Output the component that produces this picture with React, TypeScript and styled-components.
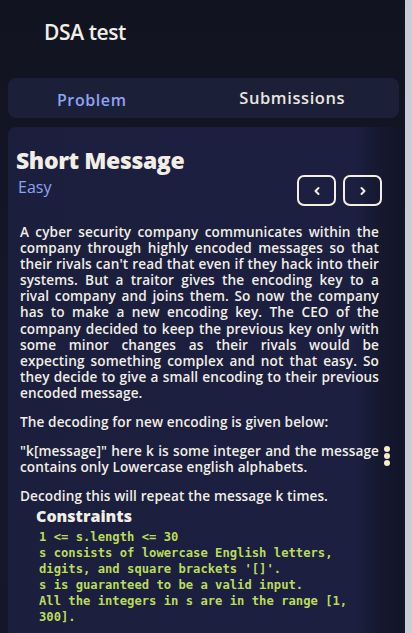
import React from "react";
import styled, { createGlobalStyle } from "styled-components";

const Global = createGlobalStyle`
  html, body { margin: 0; padding: 0; background: #14162a; }
  * { box-sizing: border-box; }
`;

const Screen = styled.div`
  width: 412px;
  height: 633px;
  overflow: hidden;
  display: flex;
  background: #c9cdd8;
`;

const Page = styled.div`
  width: 405px;
  height: 633px;
  background: linear-gradient(180deg, #111320 0%, #15182b 60%, #14162a 100%);
  display: flex;
  flex-direction: column;
  font-family: "Open Sans", "Noto Sans", sans-serif;
  color: #f1eee6;
`;

const Header = styled.div`
  flex-shrink: 0;
  height: 72px;
  padding: 18px 0 0 44px;
  font-size: 21px;
  font-weight: 600;
  letter-spacing: -0.4px;
`;

const Tabs = styled.div`
  flex-shrink: 0;
  margin: 6px 6px 0 8px;
  height: 40px;
  border-radius: 8px;
  background: #1c1f38;
  display: grid;
  grid-template-columns: 1fr 1fr;
  align-items: center;
`;

const Tab = styled.div<{ $active?: boolean }>`
  text-align: center;
  font-size: ${(p) => (p.$active ? "16px" : "16.5px")};
  font-weight: 600;
  letter-spacing: 0.6px;
  color: ${(p) => (p.$active ? "#8ea3f4" : "#e9e6df")};
  padding-right: ${(p) => (p.$active ? "28px" : "18px")};
  margin-top: ${(p) => (p.$active ? "4px" : "-2px")};
`;

const Card = styled.div`
  position: relative;
  flex: 1;
  min-height: 0;
  overflow: hidden;
  margin: 9px 2px 0 8px;
  border-radius: 8px 8px 0 0;
  background: linear-gradient(90deg, #1b1e3c 0%, #1c1f40 88%, #15182f 94%, #121428 100%);
  padding: 18px 24px 0 8px;
  display: flex;
  flex-direction: column;
`;

const TitleRow = styled.div`
  display: flex;
  justify-content: space-between;
  align-items: flex-end;
`;

const TitleBlock = styled.div`
  display: flex;
  flex-direction: column;
`;

const Title = styled.h1`
  margin: 0;
  font-size: 23px;
  font-weight: 800;
  letter-spacing: -0.4px;
  line-height: 30px;
`;

const Difficulty = styled.div`
  margin-top: 1px;
  font-size: 16px;
  font-weight: 500;
  color: #8ea3f4;
  padding-left: 2px;
`;

const NavGroup = styled.div`
  display: flex;
  gap: 7px;
  margin-bottom: -8px;
  margin-right: -3px;
`;

const NavButton = styled.button`
  width: 39px;
  height: 31px;
  border: 2px solid #f4efe2;
  border-radius: 7px;
  background: transparent;
  color: #f4efe2;
  display: flex;
  align-items: center;
  justify-content: center;
  padding: 0;
`;

const Body = styled.div`
  margin-top: 26px;
  padding-left: 4px;
  display: flex;
  flex-direction: column;
  gap: 13px;
`;

const Para = styled.p`
  margin: 0;
  font-size: 13.6px;
  font-weight: 600;
  line-height: 16.1px;
  text-align: justify;
  letter-spacing: 0.1px;
`;

const Heading = styled.h2`
  margin: -11px 0 0 16px;
  font-size: 16px;
  font-weight: 800;
  line-height: 20px;
`;

const Mono = styled.pre`
  margin: -10px 0 0 19px;
  font-family: "DejaVu Sans Mono", "Liberation Mono", monospace;
  font-size: 12.2px;
  line-height: 16px;
  color: #b9dc5a;
  white-space: pre-wrap;
  font-weight: 600;
`;

const Dots = styled.div`
  position: absolute;
  right: 13px;
  top: 319px;
  display: flex;
  flex-direction: column;
  gap: 1px;
`;

const Dot = styled.span`
  width: 6px;
  height: 6px;
  border-radius: 50%;
  background: #f6ecc8;
`;

const Chevron = ({ dir }: { dir: "left" | "right" }) => (
  <svg width="10" height="10" viewBox="0 0 10 10">
    <path
      d={dir === "left" ? "M6.5 2 L3.5 5 L6.5 8" : "M3.5 2 L6.5 5 L3.5 8"}
      fill="none"
      stroke="currentColor"
      strokeWidth="2"
      strokeLinecap="round"
      strokeLinejoin="round"
    />
  </svg>
);

export default function App() {
  return (
    <>
      <Global />
      <Screen>
        <Page>
          <Header>DSA test</Header>
          <Tabs>
            <Tab $active>Problem</Tab>
            <Tab>Submissions</Tab>
          </Tabs>
          <Card>
            <TitleRow>
              <TitleBlock>
                <Title>Short Message</Title>
                <Difficulty>Easy</Difficulty>
              </TitleBlock>
              <NavGroup>
                <NavButton aria-label="Previous">
                  <Chevron dir="left" />
                </NavButton>
                <NavButton aria-label="Next">
                  <Chevron dir="right" />
                </NavButton>
              </NavGroup>
            </TitleRow>
            <Body>
              <Para>
                A cyber security company communicates within the company through highly
                encoded messages so that their rivals can't read that even if they hack into
                their systems. But a traitor gives the encoding key to a rival company and joins
                them. So now the company has to make a new encoding key. The CEO of the company
                decided to keep the previous key only with some minor changes as their rivals
                would be expecting something complex and not that easy. So they decide to give
                a small encoding to their previous encoded message.
              </Para>
              <Para>The decoding for new encoding is given below:</Para>
              <Para>
                "k[message]" here k is some integer and the message contains only Lowercase
                english alphabets.
              </Para>
              <Para>Decoding this will repeat the message k times.</Para>
              <Heading>Constraints</Heading>
              <Mono>{`1 <= s.length <= 30
s consists of lowercase English letters,
digits, and square brackets '[]'.
s is guaranteed to be a valid input.
All the integers in s are in the range [1,
300].`}</Mono>
            </Body>
            <Dots>
              <Dot />
              <Dot />
              <Dot />
            </Dots>
          </Card>
        </Page>
      </Screen>
    </>
  );
}
